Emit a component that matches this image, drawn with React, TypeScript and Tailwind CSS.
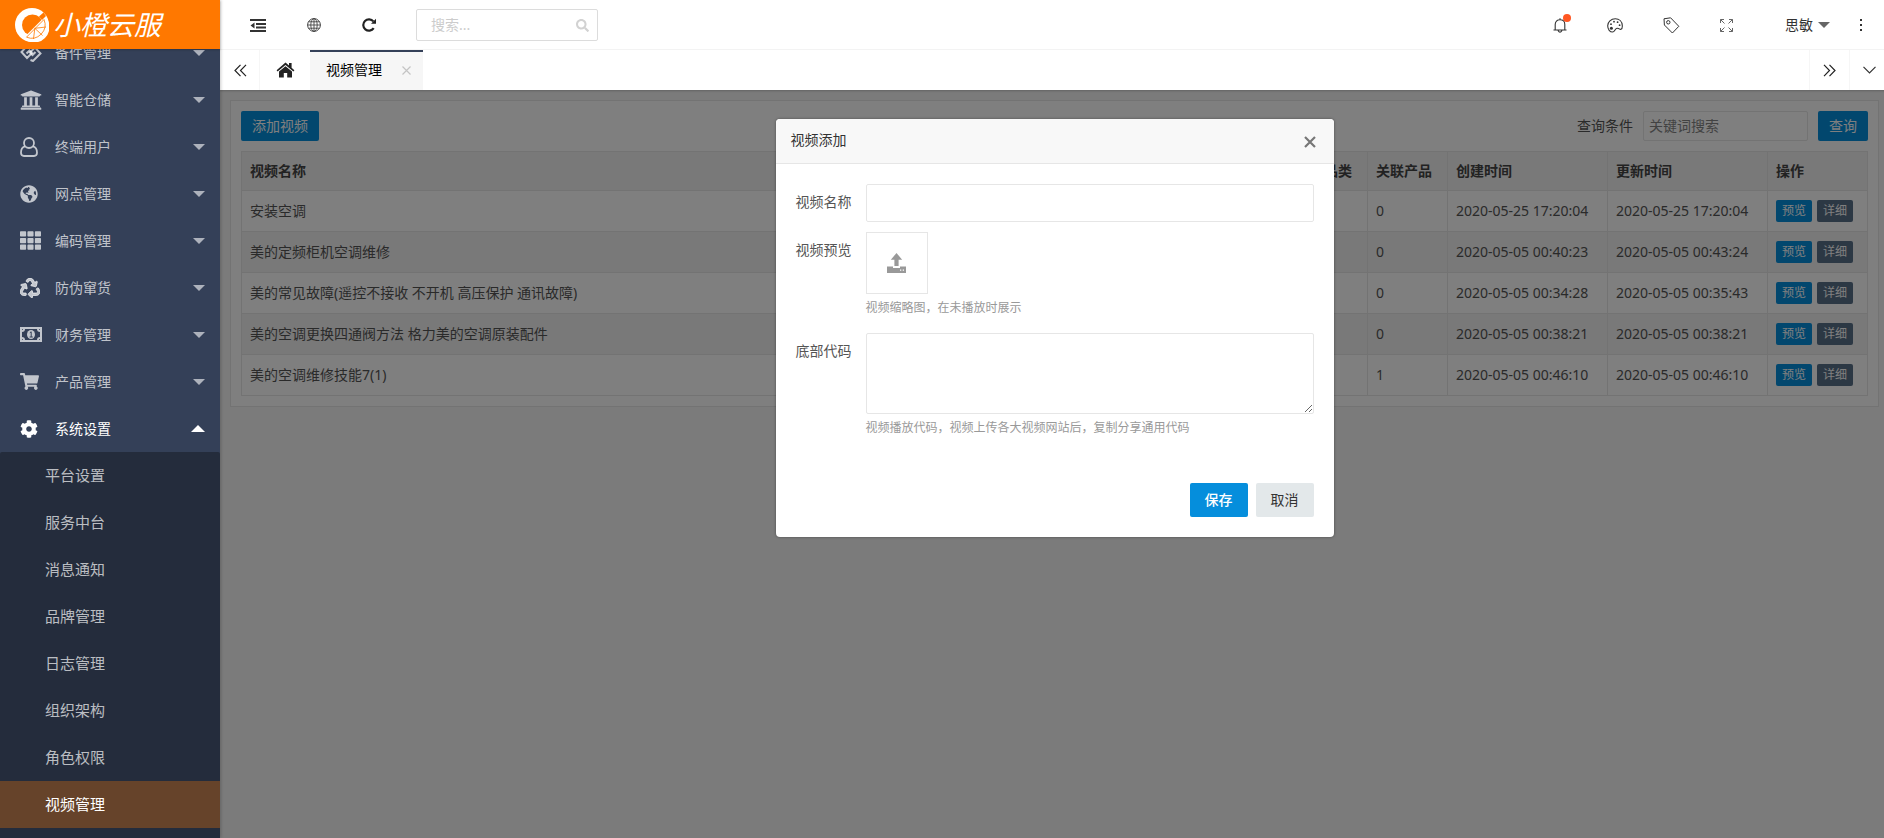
import type { ReactNode } from "react";
import {
  FaCog,
  FaGlobeAmericas,
  FaRecycle,
  FaSearch,
  FaShoppingCart,
  FaTh,
  FaUniversity,
} from "react-icons/fa";

type NavItem = { label: string; icon: ReactNode; open?: boolean };

const NAV: NavItem[] = [
  { label: "备件管理", icon: <PartsIcon /> },
  { label: "智能仓储", icon: <FaUniversity size={22} /> },
  { label: "终端用户", icon: <UserIcon /> },
  { label: "网点管理", icon: <FaGlobeAmericas size={18} /> },
  { label: "编码管理", icon: <FaTh size={21} /> },
  { label: "防伪窜货", icon: <FaRecycle size={20} stroke="currentColor" strokeWidth={24} /> },
  { label: "财务管理", icon: <MoneyIcon /> },
  { label: "产品管理", icon: <FaShoppingCart size={19} /> },
  { label: "系统设置", icon: <FaCog size={18} />, open: true },
];

const SUB_NAV = [
  "平台设置",
  "服务中台",
  "消息通知",
  "品牌管理",
  "日志管理",
  "组织架构",
  "角色权限",
  "视频管理",
];

const ROWS = [
  { name: "安装空调", count: 0, created: "2020-05-25 17:20:04", updated: "2020-05-25 17:20:04" },
  { name: "美的定频柜机空调维修", count: 0, created: "2020-05-05 00:40:23", updated: "2020-05-05 00:43:24" },
  { name: "美的常见故障(遥控不接收 不开机 高压保护 通讯故障)", count: 0, created: "2020-05-05 00:34:28", updated: "2020-05-05 00:35:43" },
  { name: "美的空调更换四通阀方法 格力美的空调原装配件", count: 0, created: "2020-05-05 00:38:21", updated: "2020-05-05 00:38:21" },
  { name: "美的空调维修技能7(1)", count: 1, created: "2020-05-05 00:46:10", updated: "2020-05-05 00:46:10" },
];

/* -------------------- ICONS -------------------- */
function LogoIcon() {
  return (
    <svg width="34" height="34" viewBox="0 0 34 34">
      <circle cx="17" cy="17" r="17" fill="#fff" />
      <circle cx="17.5" cy="17" r="10.5" fill="#ff7800" />
      <path d="M30 8.5A15 15 0 0 1 8.5 30Z" fill="#fff" />
      <path d="M29 11.5A13.5 13.5 0 0 1 11.5 29.2Z" fill="none" stroke="#ff7800" strokeWidth="0.8" />
      <path d="M19.8 20.3L31 19M19.8 20.3L27.5 27.5M19.8 20.3L18.5 31" stroke="#ff7800" strokeWidth="0.8" />
      <path d="M24 8.5L28.5 4.5L31 8L27 12Z" fill="#ff7800" />
    </svg>
  );
}

function PartsIcon() {
  return (
    <svg width="22" height="18" viewBox="0 0 22 18" fill="none" stroke="currentColor" strokeWidth="2">
      <path d="M11 1.5 L8.5 0.5 L1.5 8 L7 14 L12 9 L9.5 6.5 L6.5 9.5" />
      <path d="M10.5 16 L13 17 L20.5 9.5 L15 3.5 L10 8.5 L12.5 11 L15.5 8" />
    </svg>
  );
}

function UserIcon() {
  return (
    <svg width="18" height="20" viewBox="0 0 18 20" fill="none" stroke="currentColor" strokeWidth="1.8">
      <circle cx="9" cy="6" r="5" />
      <path d="M4.8 9.3C2 10 1 12.3 1 15.8C1 18 2 19 4 19H14C16 19 17 18 17 15.8C17 12.3 16 10 13.2 9.3" />
    </svg>
  );
}

function MoneyIcon() {
  return (
    <svg width="22" height="15" viewBox="0 0 22 15" fill="none" stroke="currentColor">
      <rect x="1" y="1" width="20" height="13" strokeWidth="2" />
      <path d="M2 4 Q4 4 4 2 M18 2 Q18 4 20 4 M2 11 Q4 11 4 13 M18 13 Q18 11 20 11" strokeWidth="2" />
      <ellipse cx="11" cy="7.5" rx="4" ry="4.6" fill="currentColor" stroke="none" />
      <path d="M9.8 5.8 L11.2 4.8 V10 M9.6 10 H12.8" stroke="#344058" />
    </svg>
  );
}

function OutdentIcon() {
  return (
    <svg width="16" height="13" viewBox="0 0 16 13" fill="#333">
      <path d="M0 0H16V2H0Z M6 4H16V6H6Z M6 7.5H16V9.5H6Z M0 11H16V13H0Z M4.5 3.5V9.5L0.5 6.5Z" />
    </svg>
  );
}

function GlobeIcon() {
  return (
    <svg width="14" height="14" viewBox="0 0 14 14" fill="none" stroke="#444">
      <circle cx="7" cy="7" r="6.4" />
      <ellipse cx="7" cy="7" rx="3.2" ry="6.4" strokeWidth="0.9" />
      <path d="M7 0.5V13.5 M0.5 7H13.5 M1.5 3.8H12.5 M1.5 10.2H12.5" strokeWidth="0.9" />
    </svg>
  );
}

function ReloadIcon() {
  return (
    <svg width="14" height="14" viewBox="0 0 14 14">
      <path d="M11.4 3.4 A5.7 5.7 0 1 0 11.7 10.2" fill="none" stroke="#222" strokeWidth="2.2" />
      <path d="M14 0.8V5.8H9Z" fill="#222" />
    </svg>
  );
}

function HomeIcon() {
  return (
    <svg width="19" height="16" viewBox="0 0 19 16" fill="#222">
      <path d="M0.6 8.2 L9.5 0.6 L13 3.5 V1 H15.6 V5.7 L18.4 8.2 L17.4 9.4 L9.5 2.9 L1.6 9.4Z" />
      <path d="M9.5 4.2 L16 9.6 V15.5 H11.2 V11 H7.8 V15.5 H3 V9.6Z" />
    </svg>
  );
}

function BellIcon() {
  return (
    <svg width="14" height="15" viewBox="0 0 14 15" fill="none" stroke="#333" strokeWidth="1.1">
      <path d="M0.5 12H13.5 M2.2 12V6.5C2.2 3.6 4 1.8 7 1.8S11.8 3.6 11.8 6.5V12 M7 0.3V1.8 M5 12.5Q7 16 9 12.5" />
    </svg>
  );
}

function PaletteIcon() {
  return (
    <svg width="16" height="15" viewBox="0 0 16 15" fill="none" stroke="#333" strokeWidth="1.1">
      <path d="M8.3 0.8C4 0.8 0.7 4 0.7 7.8C0.7 11.5 3 14 5.5 14C8 14 7.6 10.6 10 10.2C12 9.9 12.6 11.8 14 11.3C15 10.9 15.4 9.3 15.3 7.6C15.1 3.6 12.2 0.8 8.3 0.8Z" />
      <g fill="#333" stroke="none">
        <circle cx="4.4" cy="10.2" r="1.5" />
        <circle cx="4" cy="6.2" r="0.9" />
        <circle cx="7" cy="3.7" r="0.9" />
        <circle cx="10.6" cy="4.2" r="0.9" />
        <circle cx="12.6" cy="7.2" r="0.9" />
      </g>
    </svg>
  );
}

function TagIcon() {
  return (
    <svg width="17" height="17" viewBox="0 0 17 17" fill="none" stroke="#333">
      <path d="M1 1.8 L7.6 0.8 L15.8 9.3 L9.4 16 L1.4 8Z" />
      <circle cx="5.3" cy="5.3" r="1.7" />
    </svg>
  );
}

function ExpandIcon() {
  return (
    <svg width="13" height="13" viewBox="0 0 13 13" fill="none" stroke="#666">
      <path d="M0.5 4V0.5H4 M0.5 0.5L4.5 4.5 M9 0.5H12.5V4 M12.5 0.5L8.5 4.5 M0.5 9V12.5H4 M0.5 12.5L4.5 8.5 M9 12.5H12.5V9 M12.5 12.5L8.5 8.5" />
    </svg>
  );
}

function DoubleChevron({ right }: { right?: boolean }) {
  return (
    <svg width="13" height="13" viewBox="0 0 13 13" fill="none" stroke="#222" strokeWidth="1.2">
      {right ? <path d="M1 0.8L6.5 6.5L1 12.2 M6.5 0.8L12 6.5L6.5 12.2" /> : <path d="M6.5 0.8L1 6.5L6.5 12.2 M12 0.8L6.5 6.5L12 12.2" />}
    </svg>
  );
}

function UploadIcon() {
  return (
    <svg width="19" height="20" viewBox="0 0 19 20" fill="#999">
      <path d="M9.5 0 L15.2 6.8 H11.6 V13 H7.4 V6.8 H3.8Z" />
      <path d="M0 13.5H6V15H13V13.5H19V20H0Z M13 16.5V17.8H14.3V16.5Z M15.7 16.5V17.8H17V16.5Z" fillRule="evenodd" />
    </svg>
  );
}

/* -------------------- SIDEBAR -------------------- */
function Sidebar() {
  return (
    <aside className="z-20 flex w-[220px] shrink-0 flex-col bg-[#344058] shadow-[1px_0_3px_rgba(0,0,0,0.2)]">
      <div className="z-10 flex h-[49px] shrink-0 items-center gap-1 bg-[#ff7800] pl-[15px] text-white shadow-[0_1px_2px_rgba(0,0,0,0.2)]">
        <LogoIcon />
        <span className="text-[27px] leading-[48px] italic">小橙云服</span>
      </div>
      <nav className="flex min-h-0 flex-1 flex-col justify-start overflow-hidden">
        <ul className="-mt-5">
          {NAV.map((item) => (
            <li key={item.label}>
              <a
                href="#"
                className={`flex h-[47px] items-center pl-5 pr-[15px] text-sm ${
                  item.open ? "text-white" : "text-white/70"
                }`}
              >
                <span className="w-[35px]">{item.icon}</span>
                <span className="flex-1 pt-px">{item.label}</span>
                {item.open ? (
                  <span className="border-x-[7px] border-b-[7px] border-x-transparent border-b-white" />
                ) : (
                  <span className="border-x-[6px] border-t-[6px] border-x-transparent border-t-white/60" />
                )}
              </a>
            </li>
          ))}
        </ul>
        <ul className="flex-1 rounded-t-xs bg-[#242c3c]">
          {SUB_NAV.map((label) => (
            <li key={label}>
              <a
                href="#"
                className={`flex h-[47px] items-center pl-[45px] text-[15px] ${
                  label === "视频管理" ? "bg-[#66432a] text-white" : "text-white/70"
                }`}
              >
                {label}
              </a>
            </li>
          ))}
        </ul>
      </nav>
    </aside>
  );
}

/* -------------------- TOP BARS -------------------- */
function Header() {
  return (
    <header className="flex h-[50px] shrink-0 items-center border-b border-[#f6f6f6] bg-white pt-px pr-[27px] pl-[30px]">
      <div className="flex items-center gap-[41px]">
        <button aria-label="收起菜单"><OutdentIcon /></button>
        <button aria-label="语言"><GlobeIcon /></button>
        <button aria-label="刷新"><ReloadIcon /></button>
      </div>
      <div className="ml-10 flex h-8 w-[182px] items-center rounded-xs border border-[#dcdcdc] pr-2 pl-[14px]">
        <input
          aria-label="搜索"
          placeholder="搜索..."
          className="w-full min-w-0 text-sm outline-none placeholder:text-[#ccc]"
        />
        <FaSearch size={13} className="shrink-0 text-[#d2d2d2]" />
      </div>
      <div className="ml-auto flex items-center">
        <div className="flex items-center gap-10">
          <button aria-label="消息" className="relative">
            <BellIcon />
            <span className="absolute -top-1 -right-1 size-2 rounded-full bg-[#ff5722]" />
          </button>
          <button aria-label="主题"><PaletteIcon /></button>
          <button aria-label="便签"><TagIcon /></button>
          <button aria-label="全屏"><ExpandIcon /></button>
        </div>
        <button className="ml-[52px] flex items-center gap-[5px] text-sm text-[#333]">
          思敏
          <span className="border-x-[6px] border-t-[6px] border-x-transparent border-t-[#666]" />
        </button>
        <button aria-label="更多" className="ml-[30px] flex flex-col gap-[3px]">
          <span className="size-0.5 bg-[#333]" />
          <span className="size-0.5 bg-[#333]" />
          <span className="size-0.5 bg-[#333]" />
        </button>
      </div>
    </header>
  );
}

function TabBar() {
  return (
    <div className="z-10 flex h-10 shrink-0 items-stretch bg-white shadow-[0_1px_2px_rgba(0,0,0,0.2)]">
      <button aria-label="向左" className="flex w-10 items-center justify-center border-r border-[#f6f6f6] pl-0.5">
        <DoubleChevron />
      </button>
      <button aria-label="首页" className="flex w-[50px] items-center justify-center">
        <HomeIcon />
      </button>
      <div className="flex w-[113px] items-center justify-between border-t-2 border-[#344058] bg-[#f6f6f6] pr-3 pb-0.5 pl-4 text-sm text-black">
        <span>视频管理</span>
        <button aria-label="关闭标签">
          <svg width="9" height="9" viewBox="0 0 9 9" stroke="#c4c4c4" strokeWidth="1.2">
            <path d="M0.5 0.5L8.5 8.5M8.5 0.5L0.5 8.5" />
          </svg>
        </button>
      </div>
      <button aria-label="向右" className="ml-auto flex w-10 items-center justify-center border-l border-[#f6f6f6]">
        <DoubleChevron right />
      </button>
      <button aria-label="标签操作" className="flex w-10 items-center justify-center border-l border-[#f6f6f6]">
        <svg width="13" height="8" viewBox="0 0 13 8" fill="none" stroke="#333" strokeWidth="1.2">
          <path d="M0.5 0.8L6.5 6.8L12.5 0.8" />
        </svg>
      </button>
    </div>
  );
}

/* -------------------- VIDEO LIST -------------------- */
function VideoList() {
  const cell = "border border-[#e6e6e6] px-2";

  return (
    <section className="m-[10px] border border-[#e6e6e6] bg-white p-[10px] text-sm text-[#555]">
      <div className="mb-[10px] flex h-[30px] items-stretch justify-between">
        <button className="rounded-xs bg-[#058edc] px-[11px] text-white">添加视频</button>
        <div className="flex items-stretch gap-[10px]">
          <label htmlFor="keyword" className="self-center">查询条件</label>
          <input
            id="keyword"
            placeholder="关键词搜索"
            className="w-[165px] rounded-xs border border-[#e6e6e6] bg-white px-[5px] placeholder:text-[#858585]"
          />
          <button className="w-[50px] rounded-xs bg-[#058edc] text-white">查询</button>
        </div>
      </div>
      <table className="w-full table-fixed border-collapse">
        <thead>
          <tr className="h-[39px] bg-[#f2f2f2] text-left text-[#444]">
            <th className={cell}>视频名称</th>
            <th className={`${cell} w-20`}>产品品类</th>
            <th className={`${cell} w-20`}>关联产品</th>
            <th className={`${cell} w-40`}>创建时间</th>
            <th className={`${cell} w-40`}>更新时间</th>
            <th className={`${cell} w-[100px]`}>操作</th>
          </tr>
        </thead>
        <tbody>
          {ROWS.map((row) => (
            <tr key={row.name} className="h-[41px] even:bg-[#f2f2f2]">
              <td className={cell}>{row.name}</td>
              <td className={cell} />
              <td className={cell}>{row.count}</td>
              <td className={cell}>{row.created}</td>
              <td className={cell}>{row.updated}</td>
              <td className={cell}>
                <div className="flex gap-[5px] text-xs text-white">
                  <button className="h-[22px] w-9 rounded-xs bg-[#058edc]">预览</button>
                  <button className="h-[22px] w-9 rounded-xs bg-[#587088]">详细</button>
                </div>
              </td>
            </tr>
          ))}
        </tbody>
      </table>
    </section>
  );
}

/* -------------------- ADD VIDEO DIALOG -------------------- */
function AddVideoDialog() {
  const label = "w-[90px] shrink-0 pt-2 pl-5";
  const hint = "pt-1 pb-[5px] text-xs leading-5 text-[#999]";

  return (
    <div role="dialog" aria-labelledby="dialog-title" className="w-[558px] overflow-hidden rounded-sm bg-white text-sm text-[#555] shadow-[0_0_3px_rgba(0,0,0,0.4)]">
      <div className="flex h-[45px] items-center justify-between border-b border-[#e6e6e6] bg-[#f8f8f8] pr-[18px] pl-[15px]">
        <h2 id="dialog-title" className="pb-0.5 text-[#333]">视频添加</h2>
        <button aria-label="关闭" className="pt-0.5">
          <svg width="12" height="12" viewBox="0 0 12 12" stroke="#777" strokeWidth="2.2">
            <path d="M1 1L11 11M11 1L1 11" />
          </svg>
        </button>
      </div>
      <form className="flex flex-col gap-[10px] py-5 pr-5">
        <div className="flex">
          <label htmlFor="video-name" className={label}>视频名称</label>
          <input id="video-name" className="h-[38px] flex-1 rounded-xs border border-[#e6e6e6] px-[10px]" />
        </div>
        <div className="flex">
          <span className={label}>视频预览</span>
          <div className="flex-1">
            <button type="button" aria-label="上传缩略图" className="flex size-[62px] items-center justify-center border border-[#e6e6e6]">
              <UploadIcon />
            </button>
            <p className={hint}>视频缩略图，在未播放时展示</p>
          </div>
        </div>
        <div className="flex">
          <label htmlFor="video-code" className={label}>底部代码</label>
          <div className="flex-1">
            <textarea id="video-code" className="block h-[81px] w-full rounded-xs border border-[#e6e6e6] p-[10px]" />
            <p className={hint}>视频播放代码，视频上传各大视频网站后，复制分享通用代码</p>
          </div>
        </div>
        <div className="mt-[30px] flex justify-end gap-2">
          <button type="submit" className="h-[34px] w-[58px] rounded-xs bg-[#058edc] font-medium text-white">保存</button>
          <button type="button" className="h-[34px] w-[58px] rounded-xs bg-[#e3e8ea] text-[#333]">取消</button>
        </div>
      </form>
    </div>
  );
}

export default function App() {
  return (
    <div className="flex h-screen overflow-hidden font-['Noto_Sans','Noto_Sans_CJK_SC',sans-serif]">
      <Sidebar />
      <main className="-mr-[5px] flex min-w-0 flex-1 flex-col">
        <Header />
        <TabBar />
        <div className="relative flex-1 bg-[#f6f6f6]">
          <VideoList />
          <div className="absolute inset-0 flex items-start justify-center bg-black/50 pt-[29px]">
            <AddVideoDialog />
          </div>
        </div>
      </main>
    </div>
  );
}
